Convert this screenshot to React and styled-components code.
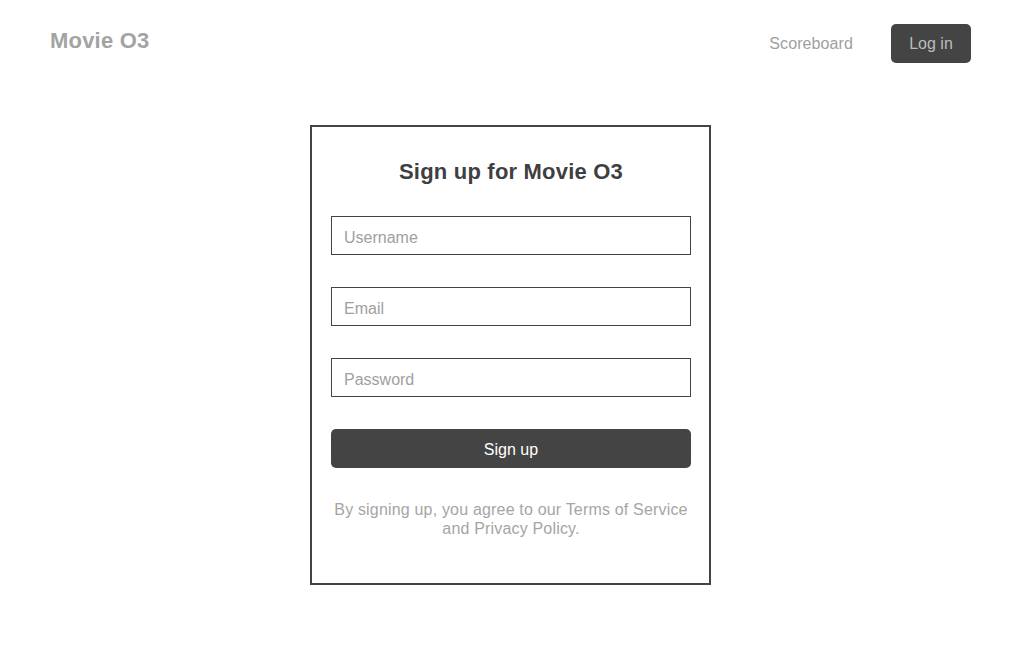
import React from "react";
import styled, { createGlobalStyle } from "styled-components";

const GlobalStyle = createGlobalStyle`
  html, body {
    margin: 0;
    padding: 0;
    background: #fff;
    font-family: "Liberation Sans", Arial, sans-serif;
  }
  * { box-sizing: border-box; }
`;

const App = () => {
  const handleSubmit = (e) => {
    e.preventDefault();
  };

  return (
    <>
      <GlobalStyle />
      <Page>
        <Header>
          <Logo>Movie O3</Logo>
          <Nav>
            <NavLink href="#">Scoreboard</NavLink>
            <LoginButton type="button">Log in</LoginButton>
          </Nav>
        </Header>

        <Main>
          <Card onSubmit={handleSubmit}>
            <Title>Sign up for Movie O3</Title>
            <Input type="text" name="username" placeholder="Username" />
            <Input type="email" name="email" placeholder="Email" />
            <Input type="password" name="password" placeholder="Password" />
            <SubmitButton type="submit">Sign up</SubmitButton>
            <Terms>
              By signing up, you agree to our Terms of Service and Privacy Policy.
            </Terms>
          </Card>
        </Main>
      </Page>
    </>
  );
};

export default App;

const Page = styled.div`
  min-height: 100vh;
`;

const Header = styled.header`
  display: flex;
  justify-content: space-between;
  align-items: flex-start;
  padding: 24px 48px 0 50px;
`;

const Logo = styled.div`
  margin-top: 4px;
  font-size: 22px;
  font-weight: 700;
  letter-spacing: 0.2px;
  color: #a3a3a3;
`;

const Nav = styled.nav`
  display: flex;
  align-items: center;
  gap: 38px;
`;

const NavLink = styled.a`
  font-size: 16px;
  letter-spacing: 0.1px;
  color: #a0a0a0;
  text-decoration: none;
`;

const LoginButton = styled.button`
  width: 80px;
  height: 39px;
  padding: 1px 0 0;
  border: none;
  border-radius: 5px;
  background: #444;
  color: #bdbdbd;
  font-family: inherit;
  font-size: 16px;
  cursor: pointer;
`;

const Main = styled.main`
  display: flex;
  justify-content: center;
  padding-top: 62px;
  padding-left: 2px;
`;

const Card = styled.form`
  width: 401px;
  display: flex;
  flex-direction: column;
  gap: 32px;
  padding: 32px 18px 45px 19px;
  border: 2px solid #444;
`;

const Title = styled.h2`
  margin: 0 0 -1px;
  text-align: center;
  font-size: 22px;
  font-weight: 700;
  letter-spacing: 0.2px;
  color: #3f3f3f;
`;

const Input = styled.input`
  width: 100%;
  height: 39px;
  padding: 5px 12px 0;
  border: 1px solid #444;
  border-radius: 0;
  font-family: inherit;
  font-size: 16px;
  color: #333;
  outline: none;

  &::placeholder {
    color: #a0a0a0;
  }
`;

const SubmitButton = styled.button`
  width: 100%;
  height: 39px;
  padding: 2px 0 0;
  border: none;
  border-radius: 5px;
  background: #444;
  color: #fff;
  font-family: inherit;
  font-size: 16px;
  cursor: pointer;
`;

const Terms = styled.p`
  margin: 0;
  text-align: center;
  font-size: 16px;
  line-height: 19px;
  letter-spacing: 0.18px;
  color: #a5a5a5;
`;
